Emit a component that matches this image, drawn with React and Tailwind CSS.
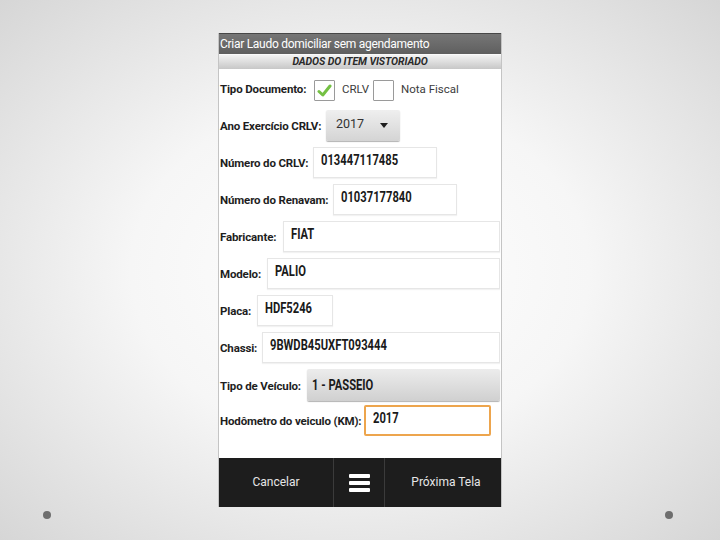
import React from "react";

const labelCls = "shrink-0 text-[11.5px] font-bold text-[#1e1e1e] leading-none tracking-[-0.15px]";
const valFont = "font-['Roboto',sans-serif] font-bold text-[14px] leading-none text-[#1a1a1a]";

function Val({ children }) {
  return <span className="inline-block whitespace-nowrap origin-left scale-x-[0.8]">{children}</span>;
}

function Field({ value, width, grow, orange }) {
  return (
    <div
      className={
        "h-[31px] flex items-start bg-white overflow-hidden " + valFont + " " +
        (orange
          ? "border-2 border-[#eda54d] rounded-[2px] pl-[7px] pt-[4px]"
          : "border border-[#e6e6e6] shadow-[0_1px_1px_rgba(0,0,0,0.05)] pl-[7px] pt-[5px]") +
        (grow ? " flex-1" : "")
      }
      style={width ? { width } : undefined}
    >
      <Val>{value}</Val>
    </div>
  );
}

function Row({ label, labelW, children, mt }) {
  return (
    <div className={"flex items-center " + mt}>
      <div className={labelCls + " pt-[3px]"} style={{ width: labelW }}>
        {label}
      </div>
      {children}
    </div>
  );
}

export default function App() {
  return (
    <div className="w-[720px] h-[540px] overflow-hidden bg-[radial-gradient(ellipse_at_center,#ffffff_0%,#f6f6f6_45%,#d6d6d6_100%)] font-['Roboto',sans-serif] flex flex-col">
      <div className="pt-[33px] flex justify-center">
        <div className="w-[284px] h-[474px] bg-white border-x border-[#c4c4c4] flex flex-col">
          {/* title bar */}
          <div className="h-[21px] border-t border-[#474747] bg-[linear-gradient(#767676,#5f5f5f)] flex items-center pl-[1px]">
            <span className="text-white text-[12px] leading-none tracking-[-0.28px]">
              Criar Laudo domiciliar sem agendamento
            </span>
          </div>
          {/* section header */}
          <div className="h-[15px] border-t border-[#fafafa] bg-[linear-gradient(#f3f3f3,#c7c7c7)] flex items-center justify-center">
            <span className="text-[10.5px] font-bold italic text-[#2a2a2a] leading-none tracking-[-0.1px]">
              DADOS DO ITEM VISTORIADO
            </span>
          </div>

          <div className="flex-1 flex flex-col pl-[1px] pr-[1px]">
            {/* Tipo Documento */}
            <div className="flex items-center mt-[10px] h-[22px]">
              <div className={labelCls + " w-[94px]"}>Tipo Documento:</div>
              <div className="w-[21px] h-[21px] border-[1.5px] border-[#9a9a9a] rounded-[1px] flex items-center justify-center">
                <svg width="15" height="13" viewBox="0 0 15 13">
                  <path d="M2 7.5 L5.8 11 L13 2" fill="none" stroke="#74c043" strokeWidth="3" strokeLinecap="round" strokeLinejoin="round" />
                </svg>
              </div>
              <span className="ml-[7px] text-[11.5px] text-[#3c3c3c] leading-none w-[31px]">CRLV</span>
              <div className="w-[21px] h-[21px] border-[1.5px] border-[#9a9a9a] rounded-[1px]" />
              <span className="ml-[7px] text-[11.5px] text-[#3c3c3c] leading-none">Nota Fiscal</span>
            </div>

            {/* Ano Exercicio */}
            <Row label="Ano Exercício CRLV:" labelW={106} mt="mt-[9px]">
              <div className="w-[74px] h-[31px] rounded-[2px] bg-[linear-gradient(#efefef,#d4d4d4)] shadow-[0_1px_1px_rgba(0,0,0,0.3)] flex items-center pl-[10px] pb-[3px]">
                <span className="text-[12.5px] text-[#333] leading-none w-[44px]">2017</span>
                <svg width="8" height="5" viewBox="0 0 8 5" className="mt-[3px]">
                  <path d="M0 0 L8 0 L4 5 Z" fill="#1e1e1e" />
                </svg>
              </div>
            </Row>

            <Row label="Número do CRLV:" labelW={93} mt="mt-[6px]">
              <Field value="013447117485" width={124} />
            </Row>

            <Row label="Número do Renavam:" labelW={113} mt="mt-[6px]">
              <Field value="01037177840" width={124} />
            </Row>

            <Row label="Fabricante:" labelW={63} mt="mt-[6px]">
              <Field value="FIAT" grow />
            </Row>

            <Row label="Modelo:" labelW={47} mt="mt-[6px]">
              <Field value="PALIO" grow />
            </Row>

            <Row label="Placa:" labelW={37} mt="mt-[6px]">
              <Field value="HDF5246" width={76} />
            </Row>

            <Row label="Chassi:" labelW={42} mt="mt-[6px]">
              <Field value="9BWDB45UXFT093444" grow />
            </Row>

            <Row label="Tipo de Veículo:" labelW={87} mt="mt-[6px]">
              <div className={"flex-1 h-[32px] rounded-[2px] bg-[linear-gradient(#ececec,#d0d0d0)] shadow-[0_1px_1px_rgba(0,0,0,0.3)] flex items-start pt-[9px] pl-[5px] " + valFont}>
                <Val>1 - PASSEIO</Val>
              </div>
            </Row>

            <Row label="Hodômetro do veiculo (KM):" labelW={144} mt="mt-[4px]">
              <Field value="2017" width={127} orange />
            </Row>
          </div>

          {/* bottom bar */}
          <div className="h-[49px] bg-[#1d1d1d] flex text-[12px] text-[#e6e6e6] leading-none">
            <div className="w-[114px] flex items-center justify-center pb-[1px]">Cancelar</div>
            <div className="w-[52px] border-x border-[#3b3b3b] flex items-center justify-center">
              <div className="flex flex-col gap-[3px] w-[21px]">
                <div className="h-[4px] bg-white rounded-[1px]" />
                <div className="h-[4px] bg-white rounded-[1px]" />
                <div className="h-[4px] bg-white rounded-[1px]" />
              </div>
            </div>
            <div className="flex-1 flex items-center justify-center pl-[6px] pb-[1px]">Próxima Tela</div>
          </div>
        </div>
      </div>
      <div className="flex justify-between pl-[43px] pr-[47px] mt-[4px]">
        <div className="w-[8px] h-[8px] rounded-full bg-[#6e6e6e]" />
        <div className="w-[8px] h-[8px] rounded-full bg-[#6e6e6e]" />
      </div>
    </div>
  );
}
